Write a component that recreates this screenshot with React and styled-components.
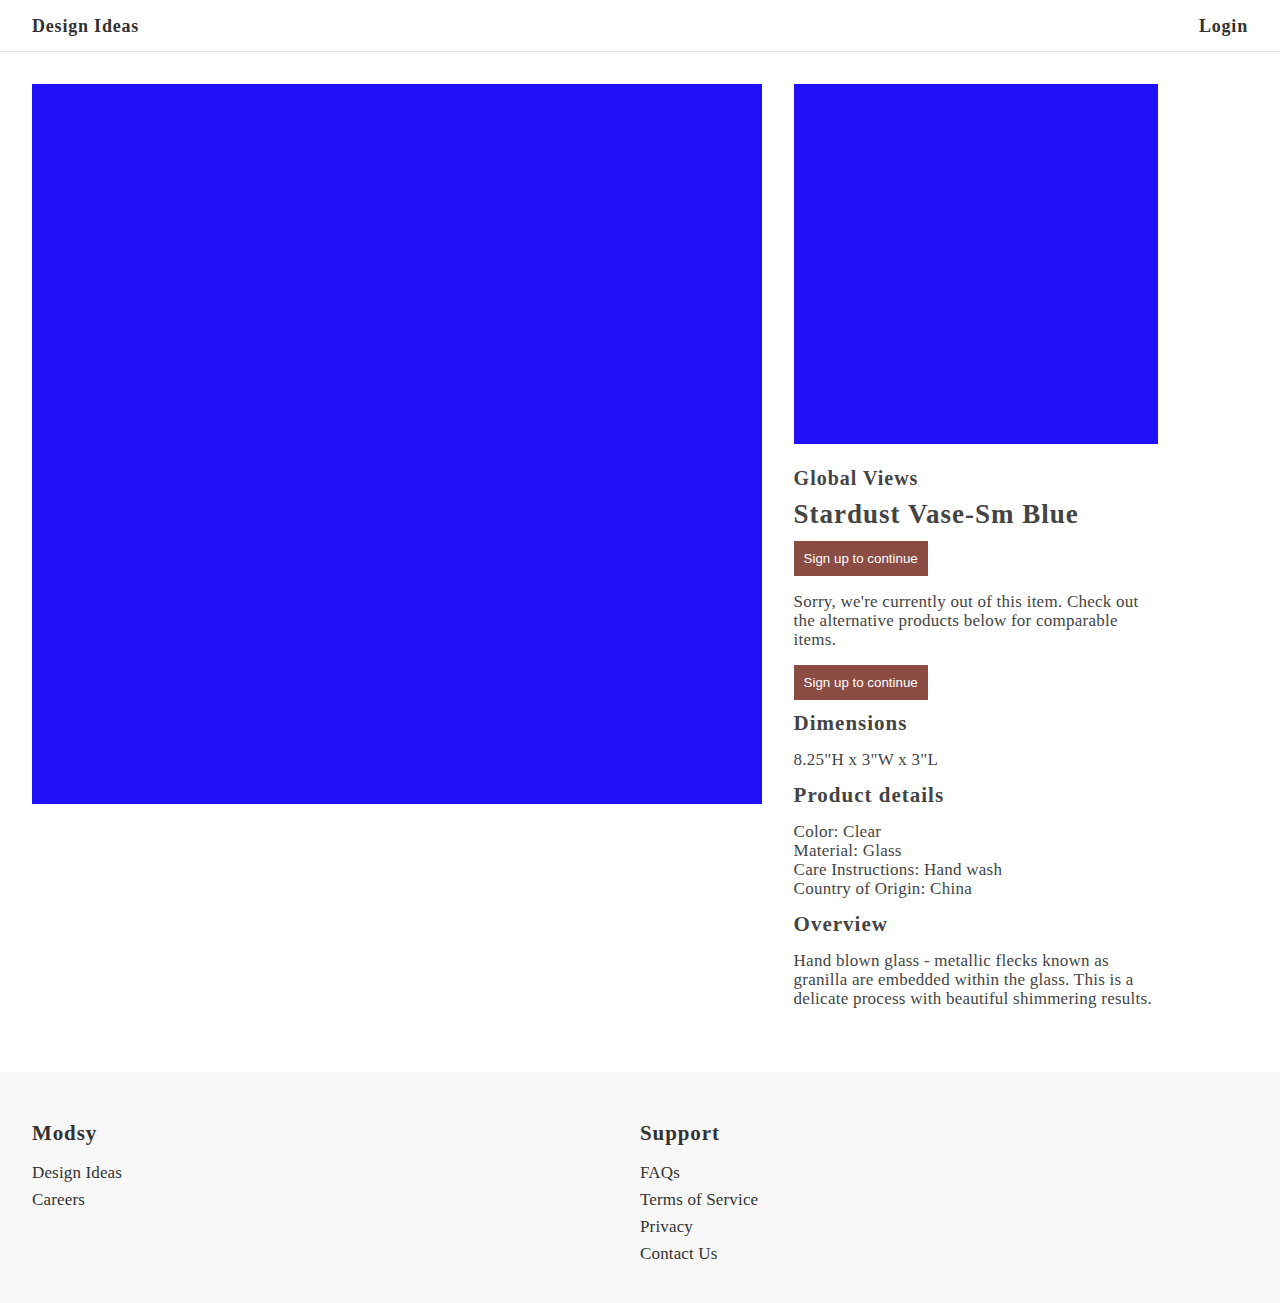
import React from 'react'
import styled, {createGlobalStyle} from 'styled-components'

const GlobalStyle = createGlobalStyle`
    body {
        margin: 0;
        background: #fff;
        font-family: "Liberation Serif", Georgia, serif;
        color: #444;
    }
    * { box-sizing: border-box; }
`

export default function App() {
    return (
        <>
            <GlobalStyle />
            <Header>
                <NavLink href="#">Design Ideas</NavLink>
                <NavLink href="#">Login</NavLink>
            </Header>

            <Main>
                <HeroImage />
                <Details>
                    <ThumbImage />
                    <Brand>Global Views</Brand>
                    <Title>Stardust Vase-Sm Blue</Title>
                    <Button>Sign up to continue</Button>
                    <Text $afterButton>
                        Sorry, we're currently out of this item. Check out the alternative products below for comparable items.
                    </Text>
                    <Button $spaced>Sign up to continue</Button>
                    <SectionTitle $tight>Dimensions</SectionTitle>
                    <Text>8.25"H x 3"W x 3"L</Text>
                    <SectionTitle>Product details</SectionTitle>
                    <Text>
                        Color: Clear<br />
                        Material: Glass<br />
                        Care Instructions: Hand wash<br />
                        Country of Origin: China
                    </Text>
                    <SectionTitle>Overview</SectionTitle>
                    <Text>
                        Hand blown glass - metallic flecks known as granilla are embedded within the glass. This is a delicate process with beautiful shimmering results.
                    </Text>
                </Details>
            </Main>

            <Footer>
                <FooterCol>
                    <FooterTitle>Modsy</FooterTitle>
                    <FooterLink href="#">Design Ideas</FooterLink>
                    <FooterLink href="#">Careers</FooterLink>
                </FooterCol>
                <FooterCol>
                    <FooterTitle>Support</FooterTitle>
                    <FooterLink href="#">FAQs</FooterLink>
                    <FooterLink href="#">Terms of Service</FooterLink>
                    <FooterLink href="#">Privacy</FooterLink>
                    <FooterLink href="#">Contact Us</FooterLink>
                </FooterCol>
            </Footer>
        </>
    )
}

const Header = styled.header`
    height: 52px;
    padding: 2px 32px 0;
    display: flex;
    align-items: center;
    justify-content: space-between;
    border-bottom: 1px solid #e6e6e6;
`

const NavLink = styled.a`
    color: #333;
    font-weight: bold;
    font-size: 18px;
    letter-spacing: 0.8px;
    text-decoration: none;
`

const Main = styled.main`
    display: grid;
    grid-template-columns: 60% 30%;
    column-gap: 32px;
    align-items: start;
    padding: 32px 32px 64px;
`

const HeroImage = styled.div`
    background: #2010f5;
    height: 720px;
`

const Details = styled.div`
    display: flex;
    flex-direction: column;
    align-items: flex-start;
`

const ThumbImage = styled.div`
    background: #2010f5;
    width: 100%;
    height: 360px;
    margin-bottom: 22px;
`

const Brand = styled.h3`
    margin: 0 0 8px;
    font-size: 20px;
    letter-spacing: 1px;
    line-height: 24px;
`

const Title = styled.h1`
    margin: 0 0 11px;
    font-size: 27px;
    letter-spacing: 1px;
    line-height: 32px;
`

const Button = styled.button`
    background: #8b4c44;
    color: #fff;
    border: none;
    font-family: "Liberation Sans", Arial, sans-serif;
    font-size: 13.33px;
    height: 35px;
    padding: 0 10px;
    margin-top: ${p => (p.$spaced ? '16px' : '0')};
`

const SectionTitle = styled.h3`
    margin: ${p => (p.$tight ? '11px' : '14px')} 0 0;
    font-size: 21px;
    letter-spacing: 1px;
    line-height: 24px;
`

const Text = styled.p`
    margin: ${p => (p.$afterButton ? '16px' : '15px')} 0 0;
    font-size: 17px;
    line-height: 19px;
    letter-spacing: 0.25px;
`

const Footer = styled.footer`
    background: #f7f7f7;
    display: grid;
    grid-template-columns: 1fr 1fr;
    padding: 48px 32px 36px;
`

const FooterCol = styled.div`
    display: flex;
    flex-direction: column;
    align-items: flex-start;
`

const FooterTitle = styled.h4`
    margin: 0 0 13px;
    color: #333;
    font-size: 21px;
    letter-spacing: 0.9px;
    line-height: 26px;
`

const FooterLink = styled.a`
    color: #333;
    font-size: 17px;
    line-height: 27px;
    letter-spacing: 0.15px;
    text-decoration: none;
`
